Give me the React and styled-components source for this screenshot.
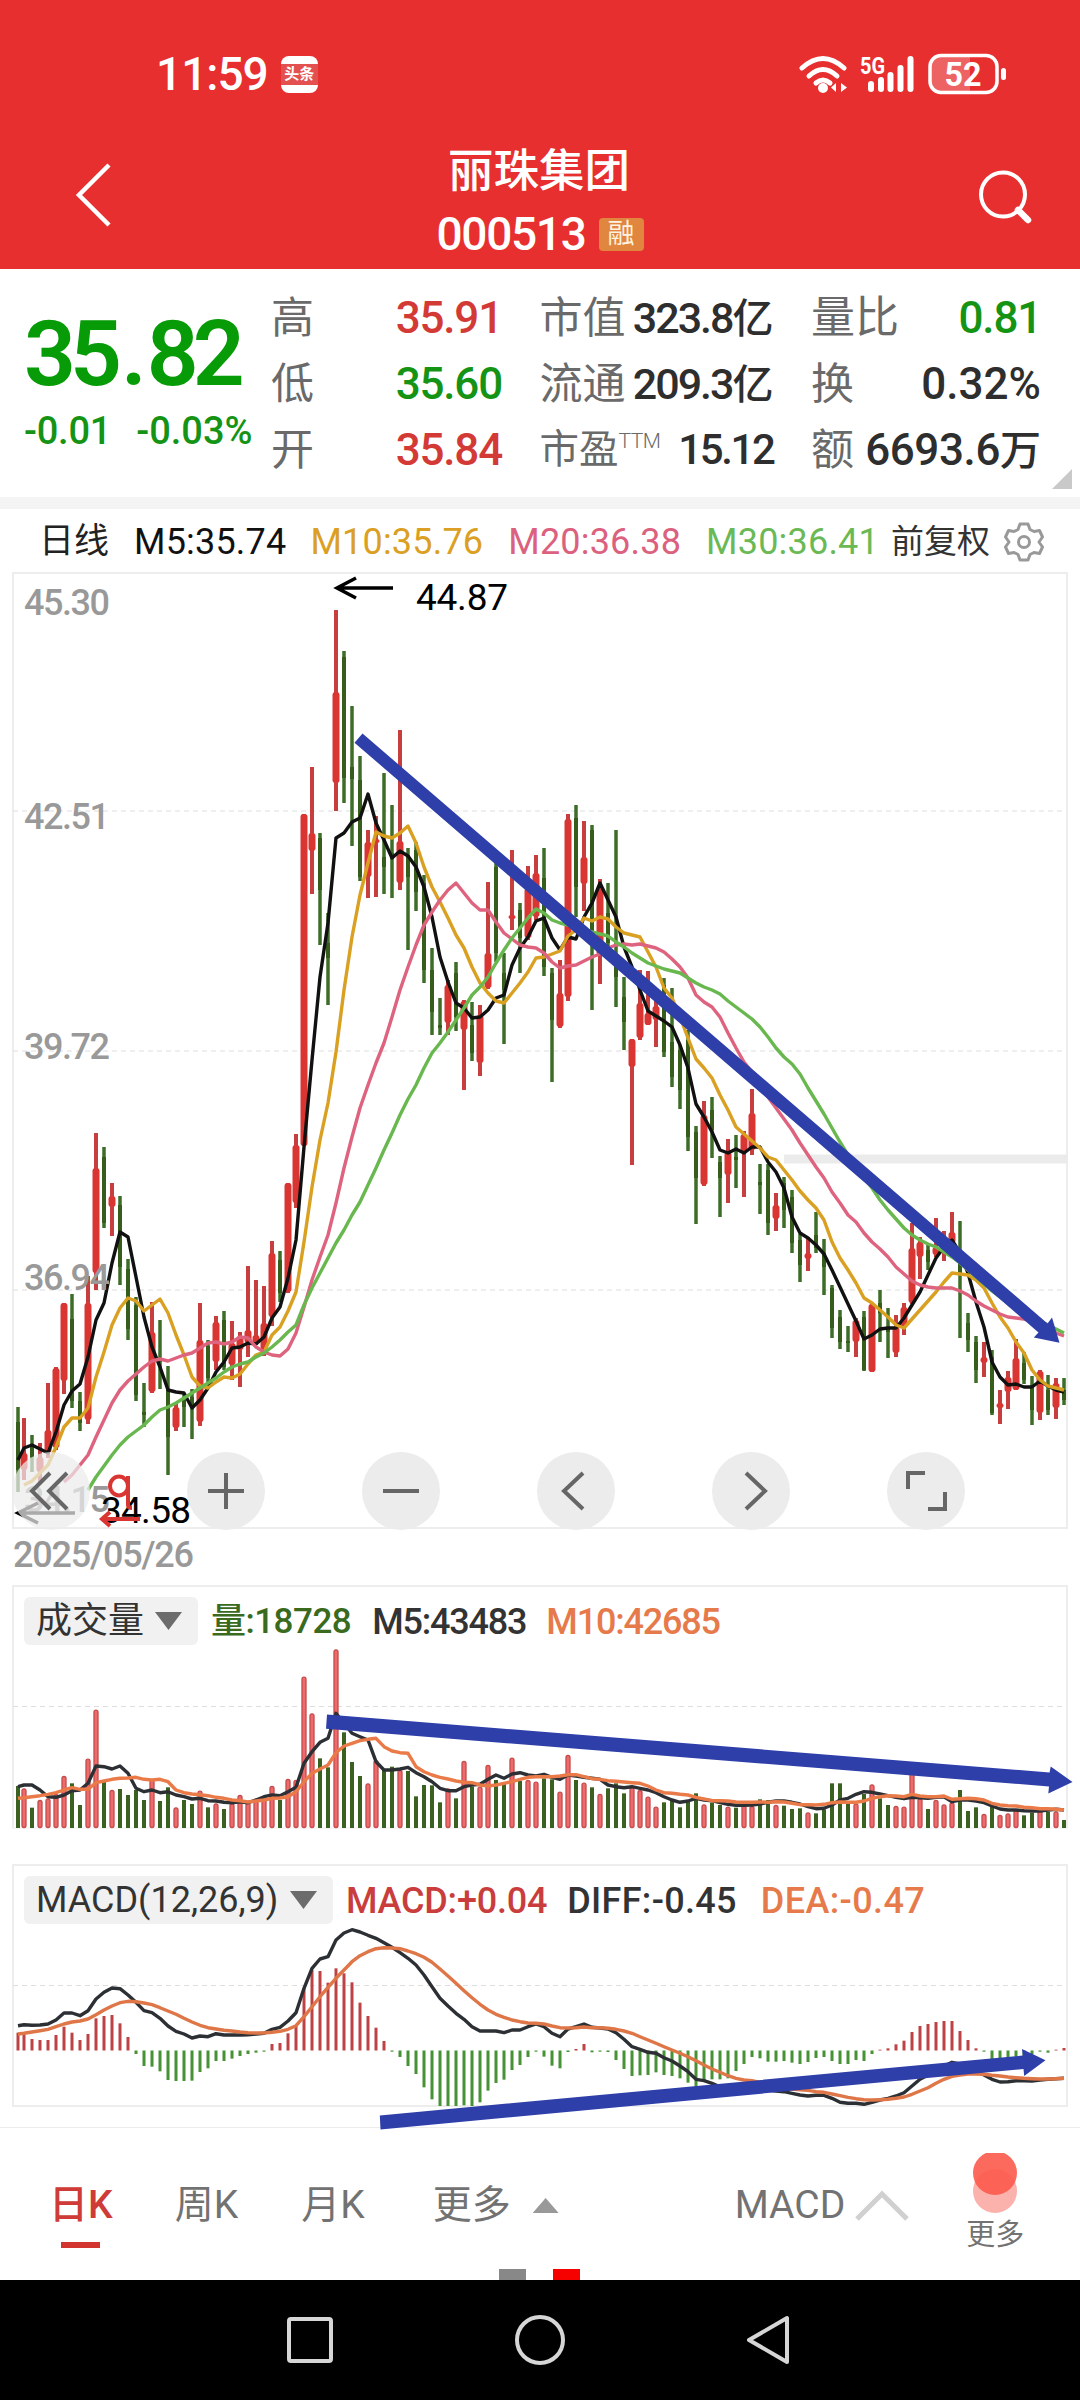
import React from 'react';
import styled, { createGlobalStyle } from 'styled-components';

const SANS = 'Roboto, "Noto Sans CJK SC", sans-serif';

const Global = createGlobalStyle`
  * { box-sizing: border-box; }
  body { margin: 0; background: #fff; font-family: ${SANS}; }
  svg { display: block; }
`;

/* ---------- data ---------- */

// colour, high, body top, body bottom, low
const CANDLES = `G1407,1422,1470,1492 R1418,1453,1470,1480 G1435,1447,1457,1472 R1443,1457,1472,1483 R1383,1430,1453,1458
R1367,1368,1448,1450 R1303,1303,1381,1394 G1294,1319,1401,1408 G1392,1401,1423,1431 R1276,1303,1420,1424
R1133,1168,1273,1290 G1147,1157,1223,1228 R1183,1196,1207,1236 G1196,1205,1267,1285 G1259,1269,1329,1340
G1297,1305,1395,1401 G1383,1412,1415,1427 R1302,1332,1392,1393 G1320,1358,1362,1389 G1366,1390,1437,1475
R1402,1407,1428,1431 G1393,1400,1407,1427 G1389,1397,1407,1439 R1303,1340,1422,1426 G1340,1346,1378,1385
R1316,1322,1362,1370 G1311,1320,1367,1370 R1321,1343,1365,1380 R1332,1336,1350,1387 R1266,1330,1343,1357
R1280,1335,1343,1345 R1286,1323,1350,1356 R1241,1253,1317,1326 G1251,1260,1293,1302 R1183,1183,1292,1293
R1134,1145,1203,1208 R814,814,1146,1146 R767,833,851,894 G833,838,890,945 G913,943,958,1005
R610,692,783,811 G651,657,778,803 G706,767,779,846 G756,780,877,881 R830,842,877,898
R816,839,843,897 G773,857,867,894 G805,853,855,898 R730,841,883,890 G848,855,877,950
G842,850,892,911 G875,883,970,983 G948,970,1012,1035 G998,1025,1028,1035 R980,985,1023,1035
G962,973,1017,1031 R1000,1001,1030,1090 G1002,1025,1053,1061 R1005,1015,1063,1076 R882,953,988,989
G863,867,953,962 G953,973,990,1044 R850,915,919,930 G903,910,938,973 R866,888,938,940
R855,873,917,920 G848,878,967,976 G968,973,1020,1082 R960,993,1027,1028 R814,819,997,1001
G805,818,887,917 R821,857,884,911 G825,830,933,1010 R879,890,955,984 G883,913,943,947
G830,960,977,1007 G977,997,1022,1050 R1039,1039,1067,1165 R970,1003,1038,1040 R971,1013,1025,1025
R1000,1006,1020,1047 G978,985,1052,1057 G988,1042,1077,1087 G1045,1050,1090,1109 G1030,1040,1137,1151
G1126,1132,1178,1224 R1101,1115,1185,1186 G1097,1110,1130,1158 G1156,1162,1178,1217 R1139,1152,1175,1203
G1135,1157,1160,1188 R1131,1134,1152,1197 R1089,1113,1150,1155 G1164,1182,1185,1214 G1164,1170,1223,1235
R1193,1205,1219,1231 G1177,1183,1210,1228 G1190,1197,1243,1253 G1234,1240,1265,1282 R1237,1253,1259,1271
G1212,1235,1248,1253 G1239,1253,1267,1295 G1285,1288,1328,1338 G1310,1317,1342,1349 G1326,1341,1343,1352
R1318,1320,1342,1357 G1311,1317,1370,1371 R1304,1304,1372,1372 G1290,1303,1313,1342 G1308,1328,1332,1358
R1315,1327,1353,1357 R1303,1307,1327,1335 R1223,1248,1303,1304 R1237,1242,1257,1279 G1243,1250,1262,1270
R1218,1247,1255,1257 R1231,1240,1250,1261 R1212,1232,1243,1247 G1221,1250,1275,1338 G1313,1323,1340,1352
G1336,1342,1370,1383 R1342,1357,1363,1377 G1350,1357,1413,1415 R1390,1403,1408,1424 R1371,1377,1392,1409
R1339,1358,1390,1390 G1352,1363,1380,1384 G1376,1388,1410,1425 R1370,1371,1413,1420 G1375,1390,1410,1415
R1378,1383,1408,1419 G1378,1390,1400,1405`.split(/\s+/).map((s) => {
  const [high, top, bottom, low] = s.slice(1).split(',').map(Number);
  return { up: s[0] === 'R', high, top, bottom, low };
});

const MA5 = [1460,1448,1445,1449,1453,1432,1405,1391,1384,1357,1320,1303,1263,1232,1237,1277,1317,1347,1367,1390,1392,1393,1408,1400,1388,1372,1362,1348,1347,1343,1344,1337,1318,1307,1278,1240,1147,1060,977,923,838,833,822,818,794,823,840,858,851,856,867,887,917,957,982,1003,1008,1018,1017,1010,998,995,965,948,937,921,918,938,950,937,939,917,903,883,900,917,947,967,990,1011,1016,1021,1027,1045,1068,1104,1117,1132,1150,1153,1149,1153,1147,1147,1162,1172,1188,1217,1233,1238,1245,1254,1270,1287,1304,1321,1339,1335,1329,1328,1328,1318,1305,1292,1275,1258,1247,1240,1253,1273,1302,1327,1362,1377,1385,1384,1387,1387,1381,1386,1390,1392];
const MA10 = [1485,1481,1473,1465,1447,1427,1418,1418,1408,1377,1352,1325,1308,1298,1301,1311,1305,1299,1313,1335,1355,1377,1386,1388,1382,1377,1378,1374,1364,1355,1352,1335,1327,1311,1292,1242,1187,1140,1103,1052,990,937,895,863,832,836,838,833,826,843,867,887,902,918,935,948,967,983,993,1001,1003,993,983,972,958,957,954,951,936,930,918,921,917,919,927,933,935,937,952,967,988,998,1017,1038,1059,1068,1078,1095,1110,1127,1134,1141,1148,1157,1160,1170,1180,1191,1200,1208,1220,1242,1258,1270,1283,1298,1303,1310,1317,1325,1328,1319,1310,1301,1292,1282,1273,1274,1275,1280,1288,1303,1317,1328,1342,1353,1370,1380,1386,1388,1390];
const MA20 = [1482,1475,1465,1455,1437,1420,1403,1390,1381,1374,1367,1361,1359,1361,1358,1355,1353,1348,1343,1342,1344,1342,1337,1338,1347,1352,1355,1356,1349,1333,1307,1280,1257,1235,1203,1168,1137,1108,1085,1063,1043,1017,990,967,945,925,912,900,890,883,893,903,910,910,922,933,939,945,947,948,953,962,968,966,965,961,957,954,948,945,944,945,944,946,948,952,959,967,978,995,1002,1007,1017,1033,1048,1062,1072,1087,1097,1108,1119,1130,1143,1155,1167,1178,1192,1203,1215,1222,1233,1242,1249,1257,1267,1274,1281,1285,1287,1288,1288,1288,1291,1295,1301,1306,1310,1314,1317,1318,1319,1321,1324,1328,1333,1336];
const MA30 = [1490,1477,1466,1455,1445,1437,1431,1425,1417,1410,1407,1403,1398,1393,1388,1383,1378,1372,1367,1364,1362,1357,1353,1347,1340,1332,1325,1305,1288,1273,1258,1243,1230,1215,1202,1185,1168,1150,1133,1115,1099,1085,1068,1053,1043,1032,1020,1008,995,987,977,963,950,938,928,918,909,913,920,923,925,927,929,932,934,936,942,947,953,958,963,966,969,971,973,978,983,987,990,994,1001,1007,1013,1019,1027,1037,1048,1057,1064,1074,1088,1101,1114,1128,1142,1155,1167,1178,1188,1200,1210,1219,1228,1235,1240,1244,1247,1252,1257,1263,1270,1277,1284,1291,1297,1303,1308,1313,1317,1321,1325,1329,1333];

const VOL = [648,655,713,690,685,672,618,640,705,566,419,635,660,657,675,660,690,628,693,652,712,690,702,662,712,700,717,700,675,697,685,680,648,690,627,630,320,430,565,592,238,487,576,618,640,570,600,590,600,603,679,645,646,697,655,685,573,650,650,585,630,642,563,633,630,635,625,628,665,555,630,638,652,672,655,640,670,652,660,680,710,697,690,712,690,670,703,698,705,710,713,705,708,688,690,705,707,717,715,727,730,718,640,640,700,700,672,643,685,705,708,710,600,685,717,690,703,697,660,723,712,732,708,735,730,720,736,728,718,725,724,750];
const VOL5 = [650,645,645,660,680,682,675,662,660,640,588,590,597,588,610,655,665,660,668,665,675,680,687,685,692,693,697,698,695,698,690,680,675,677,665,652,580,545,517,505,430,460,490,500,510,575,600,600,597,592,608,620,635,655,662,662,650,645,643,628,615,625,612,608,615,618,613,622,628,615,618,622,625,628,645,650,653,650,655,660,668,680,690,697,693,685,690,692,698,703,706,706,705,702,697,693,693,697,702,710,716,715,705,690,685,673,665,667,672,677,682,686,682,683,685,682,680,695,690,690,693,698,708,717,720,720,722,723,723,720,718,720];
const VOL10 = [685,683,680,677,673,668,660,653,658,658,638,633,628,625,624,622,628,630,628,635,660,668,672,674,677,682,685,690,692,696,693,690,685,684,680,665,635,610,597,585,548,528,520,512,508,505,530,543,548,550,590,605,615,622,627,633,637,638,645,648,645,640,635,628,622,620,620,620,618,614,614,620,626,628,632,634,636,638,640,648,660,668,670,673,675,682,687,692,692,693,696,697,697,696,697,695,696,700,704,704,705,703,698,696,697,697,693,685,680,677,678,680,673,678,680,680,678,688,686,685,686,690,700,705,707,708,712,713,716,716,718,720];

const HIST = [518,520,537,540,540,525,500,518,540,522,475,468,465,490,531,582,618,620,634,660,663,663,662,636,625,603,603,596,588,582,578,575,552,549,520,497,385,330,333,368,325,340,367,428,468,503,543,575,591,618,642,682,718,738,738,738,736,738,727,692,669,659,630,615,591,575,590,617,625,576,567,552,577,575,576,600,627,648,646,645,637,645,648,655,668,680,660,658,658,655,633,612,591,595,605,605,603,608,612,606,594,591,603,612,612,600,603,582,569,565,553,542,516,498,492,486,483,483,513,540,565,575,600,600,597,590,590,583,575,578,569,564];
const DIFF = [497,494,496,495,492,480,459,459,467,452,417,397,384,386,405,427,452,458,475,498,514,522,534,528,530,521,525,525,525,524,522,520,508,502,483,458,385,325,297,290,240,219,209,216,226,235,248,262,278,295,315,345,380,415,438,460,478,500,513,513,513,518,510,510,500,492,500,520,530,507,500,492,502,504,507,518,538,560,568,577,580,593,603,618,635,658,662,670,680,683,685,685,688,688,690,693,695,700,705,708,706,706,715,727,730,730,733,727,720,715,708,698,678,658,645,632,618,607,612,622,633,645,658,666,665,662,662,663,660,658,656,655];
const DEA = [522,520,516,512,508,500,492,486,483,477,464,450,438,428,424,425,429,434,443,453,463,475,486,496,503,507,511,513,516,518,519,519,517,514,508,497,470,440,410,382,355,330,305,287,275,266,263,264,266,273,281,292,307,327,348,370,392,413,433,450,463,472,480,485,489,490,492,498,503,504,503,501,503,503,505,508,513,520,530,540,550,560,570,580,590,602,615,627,637,647,655,660,662,667,673,678,683,687,689,691,695,697,702,707,712,716,719,720,719,718,715,711,703,693,683,670,658,649,645,642,642,643,646,648,651,653,655,656,657,657,656,655];

const xAt = (i) => (i === 0 ? 18 : 16 + 8 * i);
const points = (values, start = 0, toY = (v) => v) =>
  values.map((v, k) => `${xAt(k + start)},${toY(v).toFixed(1)}`).join(' ');
const volY = (v) => 1570 + v / 3;
const macdY = (v) => 1860 + v / 3;

/* ---------- shared pieces ---------- */

const Phone = styled.div`
  width: 1080px;
  height: 2400px;
  display: flex;
  flex-direction: column;
  overflow: hidden;
  background: #fff;
`;

const Txt = styled.span`
  font-size: ${(p) => p.$size}px;
  font-weight: ${(p) => p.$weight || 500};
  letter-spacing: ${(p) => p.$ls || 0}px;
  color: ${(p) => p.$color || '#333'};
  line-height: 1;
  white-space: nowrap;
`;

const Line = styled.polyline`
  fill: none;
  stroke: ${(p) => p.$color};
  stroke-width: 3.4;
  stroke-linejoin: round;
`;

const Grid = styled.line`
  stroke: #dedede;
  stroke-width: 1;
  stroke-dasharray: 5 4;
`;

/* ---------- header ---------- */

const Header = styled.header`
  height: 269px;
  flex: none;
  background: #e72f2f;
`;

const StatusBar = styled.div`
  height: 148px;
  padding: 0 73px 0 156px;
  display: flex;
  align-items: center;
  justify-content: space-between;
`;

const StatusSide = styled.div`
  display: flex;
  align-items: center;
  gap: ${(p) => p.$gap}px;
`;

const NewsBadge = styled.span`
  width: 37px;
  height: 37px;
  border-radius: 8px;
  background: #fff;
  display: flex;
  align-items: center;
`;

const NewsBand = styled.span`
  width: 37px;
  height: 21px;
  background: #e2504f;
  color: #fff;
  font-size: 15px;
  line-height: 20px;
  font-weight: 700;
  text-align: center;
`;

const TitleBar = styled.div`
  height: 121px;
  padding: 0 44px 0 72px;
  display: flex;
  justify-content: space-between;
`;

const IconSlot = styled.div`
  width: 60px;
  padding-top: ${(p) => p.$top}px;
`;

const TitleStack = styled.div`
  display: flex;
  flex-direction: column;
  align-items: center;
  padding-right: 28px;
`;

const Title = styled.h1`
  margin: 1px 2px 0 0;
  height: 46px;
  line-height: 46px;
  font-size: 45.5px;
  font-weight: 500;
  color: #fff;
`;

const CodeRow = styled.div`
  margin-top: 19px;
  height: 40px;
  display: flex;
  align-items: center;
  gap: 13px;
`;

const MarginTag = styled.span`
  width: 45px;
  height: 33px;
  border-radius: 4px;
  background: #e1863f;
  color: #fff3df;
  font-size: 27px;
  line-height: 32px;
  text-align: center;
`;

/* ---------- quote ---------- */

const Quote = styled.section`
  height: 228px;
  flex: none;
  display: flex;
  padding-left: 24px;
  position: relative;
`;

const PriceBlock = styled.div`
  width: 247px;
  padding-top: 40px;
`;

const Price = styled.div`
  height: 91px;
  line-height: 91px;
  font-size: 91px;
  font-weight: 600;
  letter-spacing: -4px;
  color: #079b07;
`;

const Point = styled.span`
  margin: 0 4px 0 5px;
`;

const PriceDigits = styled.span`
  letter-spacing: -6px;
`;

const ChangeRow = styled.div`
  margin-top: 12px;
  display: flex;
  gap: 25px;
`;

const Stats = styled.div`
  display: grid;
  grid-template-columns: 231px 234px 230px;
  grid-template-rows: repeat(3, 66px);
  column-gap: 37.5px;
  padding-top: 16px;
`;

const Stat = styled.div`
  display: flex;
  align-items: center;
  justify-content: space-between;
`;

const StatLabel = styled.span`
  display: flex;
  font-size: ${(p) => p.$size || 43}px;
  line-height: 60px;
  color: #6a6a6a;
`;

const Ttm = styled.sup`
  font-size: 21px;
  line-height: 42px;
  font-weight: 300;
  margin-left: 0;
  letter-spacing: -0.5px;
`;

const StatValue = styled.span`
  font-size: ${(p) => p.$size || 44}px;
  line-height: 60px;
  font-weight: 500;
  letter-spacing: ${(p) => p.$ls ?? -1.2}px;
  color: ${(p) => p.$color || '#2e2e2e'};
`;

const Unit = styled.span`
  font-size: 41px;
  letter-spacing: 0;
`;

const Corner = styled.i`
  position: absolute;
  right: 8px;
  bottom: 8px;
  width: 20px;
  height: 20px;
  background: #c9c9c9;
  clip-path: polygon(100% 0, 100% 100%, 0 100%);
`;

const Divider = styled.div`
  height: 12px;
  flex: none;
  background: #f4f4f4;
`;

/* ---------- charts ---------- */

const Charts = styled.main`
  height: 1619px;
  flex: none;
  position: relative;
  border-bottom: 1px solid #ececec;
  display: flex;
  flex-direction: column;
`;

const Legend = styled.div`
  height: 63px;
  padding: 2px 0 0 39px;
  display: flex;
  align-items: center;
`;

const LegendItem = styled(Txt)`
  margin-right: ${(p) => p.$gap}px;
`;

const Panel = styled.section`
  margin-left: 12px;
  width: 1056px;
  height: ${(p) => p.$h}px;
  border: 2px solid #ededed;
  ${(p) => p.$open && 'border-bottom-color: #f6f6f6;'}
  position: relative;
  > svg { margin: -2px; overflow: visible; }
`;

const DateRow = styled.div`
  height: 56px;
  padding: 8px 13px 0;
`;

const Spacer = styled.div`
  height: 35px;
`;

const PanelHead = styled.div`
  position: absolute;
  left: 10px;
  top: 10px;
  height: 48px;
  display: flex;
  align-items: center;
`;

const Picker = styled.button`
  height: 48px;
  width: ${(p) => p.$w}px;
  margin-right: 13px;
  padding: 0 16px 0 12px;
  border: 0;
  border-radius: 6px;
  background: #f1f1f1;
  font-family: inherit;
  display: flex;
  align-items: center;
  justify-content: space-between;
`;

const Caret = styled.i`
  width: ${(p) => p.$w}px;
  height: ${(p) => p.$h}px;
  background: ${(p) => p.$color};
  clip-path: ${(p) => (p.$up ? 'polygon(50% 0, 100% 100%, 0 100%)' : 'polygon(0 0, 100% 0, 50% 100%)')};
`;

const Readout = styled(Txt)`
  margin-right: ${(p) => p.$gap}px;
  padding-top: 1px;
`;

const Controls = styled.div`
  position: absolute;
  left: -2px;
  bottom: -3px;
  display: flex;
  gap: 97px;
`;

const RoundButton = styled.button`
  width: 78px;
  height: 78px;
  padding: 0;
  border: 0;
  border-radius: 50%;
  background: ${(p) => (p.$faded ? 'rgba(235,235,235,.72)' : '#ececec')};
`;

const Overlay = styled.svg`
  position: absolute;
  left: 0;
  top: 0;
  pointer-events: none;
`;

/* ---------- bottom ---------- */

const TabBar = styled.nav`
  height: 152px;
  flex: none;
  display: flex;
  position: relative;
  padding-left: 49px;
`;

const Tab = styled.div`
  display: flex;
  align-items: center;
  position: relative;
  height: 155px;
  margin-right: ${(p) => p.$gap}px;
  gap: ${(p) => p.$inner || 0}px;
  &::after {
    content: '';
    display: ${(p) => (p.$active ? 'block' : 'none')};
    position: absolute;
    left: 12px;
    bottom: 35px;
    width: 39px;
    height: 6px;
    background: #d2352f;
  }
`;

const MoreTab = styled.div`
  width: 58px;
  padding-top: 25px;
  display: flex;
  flex-direction: column;
  align-items: center;
  gap: 6px;
`;

const Pager = styled.div`
  position: absolute;
  left: 499px;
  bottom: 0;
  display: flex;
  gap: 27px;
`;

const PageMark = styled.i`
  width: 27px;
  height: 11px;
  background: ${(p) => p.$color};
`;

const SystemNav = styled.footer`
  flex: 1;
  background: #000;
  display: flex;
  align-items: center;
  justify-content: center;
`;

const NavIcon = styled.svg`
  margin-right: ${(p) => p.$r || 0}px;
  fill: none;
  stroke: #d6d6d6;
  stroke-width: 4;
  stroke-linejoin: round;
`;

/* ---------- parts ---------- */

const StatusIcons = () => (
  <svg width="208" height="42" viewBox="799 52 208 42" fill="none" stroke="#fff">
    <g strokeWidth="5" strokeLinecap="round">
      <path d="M802 67 Q823 48 844 67" />
      <path d="M809 75 Q823 62 837 75" />
      <path d="M816 82 Q823 76 830 82" />
    </g>
    <circle cx="823" cy="87" r="5" fill="#fff" stroke="none" />
    <path d="M836 82v9l-5-4.500zM841 82v9l6-4.500z" fill="#fff" stroke="none" />
    <text x="860" y="73" fill="#fff" stroke="none" fontFamily={SANS} fontWeight="700" fontSize="23" textLength="25" lengthAdjust="spacingAndGlyphs">5G</text>
    <g strokeWidth="6" strokeLinecap="round">
      <path d="M871 83V88M881 79V88M890.500 74V88M900.500 67V88M910.500 58V88" />
    </g>
    <path d="M941 56H970V90H941Q931 90 931 78V68Q931 56 941 56Z" fill="#fff" fillOpacity=".25" stroke="none" />
    <rect x="930" y="54.500" width="67" height="37" rx="11" strokeWidth="3.500" />
    <rect x="1001" y="67" width="5" height="12" rx="2.500" fill="#fff" stroke="none" />
    <text x="963" y="85" fill="#fff" stroke="none" textAnchor="middle" fontFamily={SANS} fontWeight="700" fontSize="34" textLength="37" lengthAdjust="spacingAndGlyphs">52</text>
  </svg>
);

const Gear = () => (
  <svg width="40" height="42" viewBox="-20 -21 40 42" fill="none" stroke="#999" strokeWidth="3" strokeLinejoin="round">
    <path d="M-4 -18H4L6 -12.500L10 -10.500L15.500 -11.500L18.500 -5L15 0L18.500 5L15.500 11.500L10 10.500L6 12.500L4 18H-4L-6 12.500L-10 10.500L-15.500 11.500L-18.500 5L-15 0L-18.500 -5L-15.500 -11.500L-10 -10.500L-6 -12.500Z" />
    <circle r="5.500" />
  </svg>
);

const AxisLabel = ({ y, children }) => (
  <text x="24" y={y} fontFamily={SANS} fontSize="36" fontWeight="500" fill="#999" textLength="86">{children}</text>
);

const PriceChart = () => (
  <svg width="1056" height="957" viewBox="12 572 1056 957">
    {[811, 1051, 1290].map((y) => <Grid key={y} x1="13" x2="1066" y1={y} y2={y} />)}
    <rect x="784" y="1154.500" width="284" height="9" fill="#ebebeb" />
    {CANDLES.map((c, i) => {
      const x = xAt(i);
      return c.up ? (
        <g key={i}>
          <rect x={x - 2} y={c.high} width="4" height={c.low - c.high} fill="#c63e3e" />
          <rect x={x - 3.5} y={c.top} width="7" height={c.bottom - c.top} rx="3" fill="#d93633" />
        </g>
      ) : (
        <g key={i}>
          <rect x={x - 1.75} y={c.high} width="3.5" height={c.low - c.high} fill="#3e6d27" />
          <rect x={x - 2} y={c.top} width="4" height={c.bottom - c.top} fill="#365d1b" />
        </g>
      );
    })}
    <Line $color="#111" points={points(MA5)} />
    <Line $color="#d9a022" points={points(MA10, 1)} />
    <Line $color="#de637f" points={points(MA20, 6)} />
    <Line $color="#68b84f" points={points(MA30, 9)} />
    <AxisLabel y="615">45.30</AxisLabel>
    <AxisLabel y="829">42.51</AxisLabel>
    <AxisLabel y="1059">39.72</AxisLabel>
    <AxisLabel y="1290">36.94</AxisLabel>
    <AxisLabel y="1512">34.15</AxisLabel>
    <g fill="none" stroke="#000" strokeWidth="3.500">
      <path d="M393 588H338M356 578L337 588L356 598" />
      <path d="M75 1513H19M38 1503L18 1513L38 1523" />
    </g>
    <g fontFamily={SANS} fontSize="37" fill="#000">
      <text x="416" y="610" textLength="92">44.87</text>
      <text x="101" y="1523" textLength="90">34.58</text>
    </g>
    <g fill="none" stroke="#d93633" strokeWidth="4">
      <ellipse cx="119" cy="1486" rx="9" ry="9.500" />
      <path d="M128 1476V1505Q128 1508 132 1508" />
      <path d="M140 1519H103M110 1512L102 1519L110 1526" />
    </g>
  </svg>
);

const controlPaths = [
  'M38 21L20 39L38 57M55 21L37 39L55 57',
  'M21 39H57M39 21V57',
  'M21 39H57',
  'M46 21L27 39L46 57',
  'M34 21L53 39L34 57',
  'M21 37V21H38M41 57H58V40',
];

const VolumeChart = () => (
  <svg width="1056" height="244" viewBox="12 1585 1056 244">
    <Grid x1="13" x2="1066" y1="1706.500" y2="1706.500" />
    {VOL.map((v, i) => CANDLES[i].up ? (
      <rect key={i} x={xAt(i) - 2} y={volY(v) + 0.5} width="4" height={1827 - volY(v)} rx="2" fill="#ee6b6b" stroke="#c64a4c" strokeWidth="1.300" />
    ) : (
      <rect key={i} x={xAt(i) - 2} y={volY(v)} width="4" height={1828 - volY(v)} fill="#3a611f" />
    ))}
    <Line $color="#2c3034" points={points(VOL5, 0, volY)} />
    <Line $color="#ea7b49" points={points(VOL10, 0, volY)} />
  </svg>
);

const MacdChart = () => (
  <svg width="1056" height="243" viewBox="12 1864 1056 243">
    <Grid x1="13" x2="1066" y1="1985.500" y2="1985.500" />
    {HIST.map((v, i) => {
      const up = v < 572;
      const top = up ? macdY(v) : 2050.5;
      const h = Math.abs(macdY(v) - 2050.5);
      return <rect key={i} x={xAt(i) - 1.5} y={top} width="3" height={h} fill={up ? '#bd4245' : '#469235'} />;
    })}
    <Line $color="#2c3034" points={points(DIFF, 0, macdY)} />
    <Line $color="#df7648" points={points(DEA, 0, macdY)} />
  </svg>
);

const TrendArrows = () => (
  <Overlay width="1080" height="1630" viewBox="0 509 1080 1630" fill="#2f3fa9">
    <path d="M362.500 733.500L1047.500 1323.500L1052 1317.500L1059.500 1342.700L1033.800 1337.500L1038.500 1332.500L354.500 742.700Z" />
    <path d="M327 1714.500L1049.600 1772.500L1050.700 1766.500L1072.500 1782L1048.300 1793.500L1049 1786.500L326 1728.700Z" />
    <path d="M379.800 2115.500L1022.800 2055.500L1022 2049L1045.500 2060.300L1024.200 2076L1023.500 2069L380.500 2129.500Z" />
  </Overlay>
);

const STATS = [
  { label: '高', value: '35.91', color: '#d33a36' },
  { label: '市值', value: '323.8', unit: '亿', size: 43, ls: -2 },
  { label: '量比', value: '0.81', color: '#149314', labelSize: 44 },
  { label: '低', value: '35.60', color: '#149314' },
  { label: '流通', value: '209.3', unit: '亿', size: 43, ls: -2 },
  { label: '换', value: '0.32%', ls: 0 },
  { label: '开', value: '35.84', color: '#d33a36' },
  { label: '市盈', ttm: true, value: '15.12', size: 42, ls: -2.4, labelSize: 39.5 },
  { label: '额', value: '6693.6', unit: '万', ls: -0.4 },
];

export default function App() {
  return (
    <Phone>
      <Global />
      <Header>
        <StatusBar>
          <StatusSide $gap={13}>
            <Txt $size={46} $color="#fff" $ls={-1}>11:59</Txt>
            <NewsBadge><NewsBand>头条</NewsBand></NewsBadge>
          </StatusSide>
          <StatusIcons />
        </StatusBar>
        <TitleBar>
          <IconSlot $top={13}>
            <svg width="44" height="68" fill="none" stroke="#fff" strokeWidth="4.500"><path d="M37 4L7 34L37 64" /></svg>
          </IconSlot>
          <TitleStack>
            <Title>丽珠集团</Title>
            <CodeRow>
              <Txt $size={46} $color="#fff" $ls={-1.3}>000513</Txt>
              <MarginTag>融</MarginTag>
            </CodeRow>
          </TitleStack>
          <IconSlot $top={20}>
            <svg width="60" height="60" fill="none" stroke="#fff">
              <circle cx="27" cy="26.500" r="22" strokeWidth="4" />
              <path d="M42 42L52 52" strokeWidth="6.500" strokeLinecap="round" />
            </svg>
          </IconSlot>
        </TitleBar>
      </Header>

      <Quote>
        <PriceBlock>
          <Price><PriceDigits>35</PriceDigits><Point>.</Point><PriceDigits>82</PriceDigits></Price>
          <ChangeRow>
            <Txt $size={38} $color="#149314" $ls={-0.2}>-0.01</Txt>
            <Txt $size={38} $color="#149314" $ls={0}>-0.03%</Txt>
          </ChangeRow>
        </PriceBlock>
        <Stats>
          {STATS.map((s) => (
            <Stat key={s.label}>
              <StatLabel $size={s.labelSize}>{s.label}{s.ttm && <Ttm>TTM</Ttm>}</StatLabel>
              <StatValue $color={s.color} $size={s.size} $ls={s.ls}>{s.value}{s.unit && <Unit>{s.unit}</Unit>}</StatValue>
            </Stat>
          ))}
        </Stats>
        <Corner />
      </Quote>
      <Divider />

      <Charts>
        <Legend>
          <LegendItem $size={35} $weight={400} $color="#222" $gap={25}>日线</LegendItem>
          <LegendItem $size={36} $weight={400} $color="#111" $ls={0.2} $gap={24}>M5:35.74</LegendItem>
          <LegendItem $size={36} $weight={400} $color="#dba023" $ls={0.2} $gap={25}>M10:35.76</LegendItem>
          <LegendItem $size={36} $weight={400} $color="#db617e" $ls={0.2} $gap={25}>M20:36.38</LegendItem>
          <LegendItem $size={36} $weight={400} $color="#6bb954" $ls={0.2} $gap={12}>M30:36.41</LegendItem>
          <LegendItem $size={33} $weight={400} $color="#333" $gap={14}>前复权</LegendItem>
          <Gear />
        </Legend>

        <Panel $h={957}>
          <PriceChart />
          <Controls>
            {controlPaths.map((d, i) => (
              <RoundButton key={d} $faded={i === 0}>
                <svg width="78" height="78" fill="none" stroke="#666" strokeWidth="4"><path d={d} /></svg>
              </RoundButton>
            ))}
          </Controls>
        </Panel>
        <DateRow><Txt $size={36} $color="#999" $ls={-1.2}>2025/05/26</Txt></DateRow>

        <Panel $h={244} $open>
          <VolumeChart />
          <PanelHead>
            <Picker $w={174}>
              <Txt $size={36} $weight={400}>成交量</Txt>
              <Caret $w={27} $h={18} $color="#6c6c6c" />
            </Picker>
            <Readout $size={35} $color="#3a6a1e" $ls={-0.5} $gap={21}>量:18728</Readout>
            <Readout $size={36} $ls={-1.2} $gap={20}>M5:43483</Readout>
            <Readout $size={36} $color="#e67a4a" $ls={-1.2}>M10:42685</Readout>
          </PanelHead>
        </Panel>
        <Spacer />
        <Panel $h={243}>
          <MacdChart />
          <PanelHead>
            <Picker $w={309}>
              <Txt $size={36} $weight={400}>MACD(12,26,9)</Txt>
              <Caret $w={27} $h={18} $color="#6c6c6c" />
            </Picker>
            <Readout $size={36} $color="#c93d3d" $ls={-0.2} $gap={20}>MACD:+0.04</Readout>
            <Readout $size={36} $ls={0.3} $gap={24}>DIFF:-0.45</Readout>
            <Readout $size={36} $color="#e67a4a" $ls={0.4}>DEA:-0.47</Readout>
          </PanelHead>
        </Panel>
        <TrendArrows />
      </Charts>

      <TabBar>
        <Tab $active $gap={62}><Txt $size={39} $color="#cf3b36">日K</Txt></Tab>
        <Tab $gap={63}><Txt $size={39} $weight={400} $color="#727272">周K</Txt></Tab>
        <Tab $gap={68}><Txt $size={39} $weight={400} $color="#727272">月K</Txt></Tab>
        <Tab $gap={176} $inner={22}>
          <Txt $size={39} $weight={400} $color="#727272">更多</Txt>
          <Caret $w={26} $h={15} $color="#999" $up />
        </Tab>
        <Tab $gap={57} $inner={10}>
          <Txt $size={39} $weight={400} $color="#727272">MACD</Txt>
          <svg width="54" height="32" fill="none" stroke="#d0d0d0" strokeWidth="5"><path d="M2 29L27 4L52 29" /></svg>
        </Tab>
        <MoreTab>
          <svg width="44" height="62">
            <circle cx="22" cy="38" r="22" fill="#fbb1ac" />
            <circle cx="22" cy="20" r="22" fill="#fc5a4b" fillOpacity=".9" />
          </svg>
          <Txt $size={29} $weight={400} $color="#727272">更多</Txt>
        </MoreTab>
        <Pager>
          <PageMark $color="#888" />
          <PageMark $color="#f60000" />
        </Pager>
      </TabBar>

      <SystemNav>
        <NavIcon $r={182} width="46" height="46"><rect x="2" y="2" width="42" height="42" rx="2" /></NavIcon>
        <NavIcon $r={181} width="50" height="50"><circle cx="25" cy="25" r="23" /></NavIcon>
        <NavIcon $r={4} width="44" height="50"><path d="M3 25L41 3V47Z" /></NavIcon>
      </SystemNav>
    </Phone>
  );
}
